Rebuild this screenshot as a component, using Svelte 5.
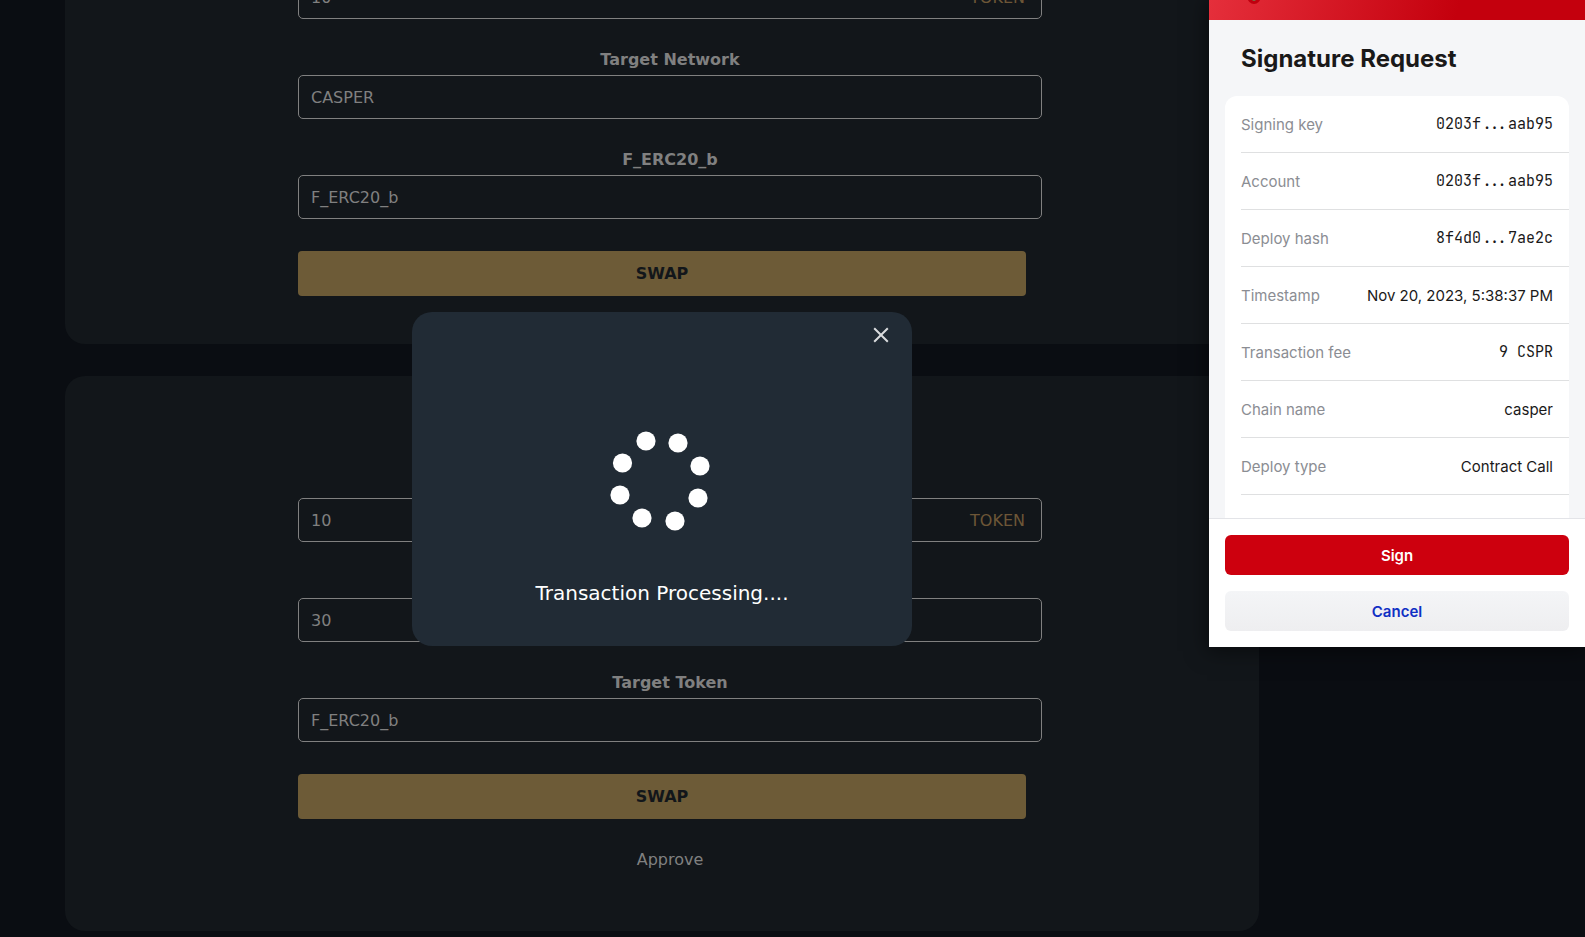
<script>
  const cards = [
    {
      id: 'mint',
      fields: [
        { id: 'amount', name: 'Amount', value: '10', unit: 'TOKEN' },
        { id: 'network', label: 'Target Network', value: 'CASPER' },
        { id: 'token', label: 'F_ERC20_b', value: 'F_ERC20_b' }
      ],
      approve: false
    },
    {
      id: 'burn',
      fields: [
        { id: 'amount', name: 'Amount', value: '10', unit: 'TOKEN' },
        { id: 'fee', name: 'Fee', value: '30' },
        { id: 'token', label: 'Target Token', value: 'F_ERC20_b' }
      ],
      approve: true
    }
  ];

  const details = [
    { name: 'Signing key', value: '0203f...aab95', mono: true },
    { name: 'Account', value: '0203f...aab95', mono: true },
    { name: 'Deploy hash', value: '8f4d0...7ae2c', mono: true },
    { name: 'Timestamp', value: 'Nov 20, 2023, 5:38:37 PM' },
    { name: 'Transaction fee', value: '9 CSPR', mono: true },
    { name: 'Chain name', value: 'casper' },
    { name: 'Deploy type', value: 'Contract Call' }
  ];

  const dots = [
    [56, 31], [88, 33], [110, 56], [108, 88],
    [85, 111], [52, 108], [30, 85], [32.5, 53]
  ];
</script>

<div class="page">
  <main class="workspace">
    {#each cards as card}
      <section class="card">
        <form class="form" onsubmit={(e) => e.preventDefault()}>
          {#each card.fields as field}
            <div class="field">
              {#if field.label}
                <label for="{card.id}-{field.id}">{field.label}</label>
              {/if}
              <div class="control">
                <input
                  id="{card.id}-{field.id}"
                  type="text"
                  value={field.value}
                  aria-label={field.name}
                />
                {#if field.unit}<span class="unit">{field.unit}</span>{/if}
              </div>
            </div>
          {/each}
          <button class="swap" type="submit">SWAP</button>
          {#if card.approve}
            <button class="approve" type="button">Approve</button>
          {/if}
        </form>
      </section>
    {/each}
  </main>

  <div class="modal-layer">
    <div class="modal" role="dialog" aria-label="Transaction status">
      <button class="close" type="button" aria-label="Close">
        <svg width="16" height="16" viewBox="0 0 16 16" aria-hidden="true">
          <path d="M1.2 1.2 14.8 14.8M14.8 1.2 1.2 14.8" stroke="#dadcde" stroke-width="2" fill="none" />
        </svg>
      </button>
      <svg class="spinner" width="144" height="140" viewBox="0 0 144 140" aria-hidden="true">
        {#each dots as [x, y]}
          <circle cx={x} cy={y} r="9.6" fill="#fff" />
        {/each}
      </svg>
      <p>Transaction Processing....</p>
    </div>
  </div>

  <aside class="wallet">
    <header class="brand">
      <svg width="24" height="20" viewBox="0 0 24 20" aria-hidden="true">
        <circle cx="13" cy="-2.5" r="6.5" fill="#c0000f" />
        <circle cx="13" cy="-1" r="2" fill="#7d6a45" />
      </svg>
    </header>
    <div class="request">
      <h1>Signature Request</h1>
      <dl>
        {#each details as row}
          <div class="row">
            <dt>{row.name}</dt>
            <dd class:mono={row.mono}>{row.value}</dd>
          </div>
        {/each}
      </dl>
    </div>
    <footer>
      <button class="sign" type="button">Sign</button>
      <button class="cancel" type="button">Cancel</button>
    </footer>
  </aside>
</div>

<style>
  :global(body) {
    margin: 0;
    background: #0a0d12;
  }

  .page {
    position: relative;
    box-sizing: border-box;
    min-height: 100vh;
    overflow: hidden;
    background: #0a0d12;
    color: #808080;
    font: 16px/24px "DejaVu Sans", Verdana, sans-serif;
  }

  button,
  input {
    font: inherit;
    color: inherit;
  }

  button {
    border: 0;
    padding: 0;
    cursor: pointer;
  }

  /* The workspace is scrolled so that the first card starts above the window. */
  .workspace {
    display: flex;
    flex-direction: column;
    gap: 32px;
    margin-top: -147px;
    margin-right: 261px;
    padding: 0 65px;
  }

  .card {
    padding: 98px 0 48px 16px;
    border-radius: 20px;
    background: #12161a;
  }

  .form {
    display: flex;
    flex-direction: column;
    max-width: 744px;
    margin: 0 auto;
  }

  .field {
    display: flex;
    flex-direction: column;
    justify-content: flex-end;
    min-height: 68px;
    margin-bottom: 32px;
  }

  .field label {
    padding-bottom: 6px;
    font-weight: 700;
    line-height: 18px;
    text-align: center;
  }

  .control {
    display: flex;
    align-items: center;
    box-sizing: border-box;
    height: 44px;
    padding: 2px 16px 0 12px;
    border: 1px solid #808080;
    border-radius: 5px;
  }

  .control input {
    flex: 1;
    min-width: 0;
    padding: 0;
    border: 0;
    outline: 0;
    background: transparent;
  }

  .unit {
    color: #6d5637;
  }

  .swap {
    height: 45px;
    margin-right: 16px;
    border-radius: 4px;
    background: #6d5b37;
    color: #12161a;
    font-weight: 700;
  }

  .approve {
    margin-top: 16px;
    padding: 13px 0 11px;
    background: transparent;
  }

  .modal-layer {
    position: absolute;
    inset: 0 261px 0 0;
    display: flex;
    justify-content: center;
    align-items: flex-start;
    padding-top: 312px;
  }

  .modal {
    display: flex;
    flex-direction: column;
    align-items: center;
    box-sizing: border-box;
    width: 500px;
    padding: 15px 23px 38px;
    border-radius: 20px;
    background: #212b35;
  }

  .close {
    display: flex;
    align-self: flex-end;
    background: transparent;
  }

  .spinner {
    margin-top: 67px;
  }

  .modal p {
    margin: 28px 0 0;
    color: #fff;
    font-size: 20px;
    line-height: 30px;
  }

  .wallet {
    position: absolute;
    top: 0;
    right: 0;
    width: 376px;
    background: #fff;
    box-shadow: 0 2px 20px 2px rgba(0, 0, 0, 0.5);
    color: #1a1919;
    font: 15px/24px Inter, "Open Sans", sans-serif;
  }

  .brand {
    height: 20px;
    padding-left: 32px;
    background: linear-gradient(106deg, #e52f3b 0%, #c4000d 66%);
  }

  .brand svg {
    display: block;
  }

  .request {
    padding: 25px 16px 0;
    background: #f5f6f8;
  }

  h1 {
    margin: 0 16px 23px;
    font-size: 24px;
    line-height: 28px;
    font-weight: 700;
  }

  dl {
    margin: 0;
    padding: 0 0 23px 16px;
    border-radius: 12px 12px 0 0;
    background: #fff;
  }

  .row {
    display: flex;
    justify-content: space-between;
    align-items: center;
    height: 56px;
    padding-right: 16px;
    border-bottom: 1px solid #dfe0e1;
  }

  dt {
    padding-top: 2px;
    color: #8b8d93;
  }

  dd {
    margin: 0;
    padding-top: 2px;
  }

  dd.mono {
    padding-top: 0;
    font-family: "JetBrains Mono", "DejaVu Sans Mono", monospace;
  }

  footer {
    display: flex;
    flex-direction: column;
    gap: 16px;
    padding: 16px;
    border-top: 1px solid #e3e4e8;
  }

  footer button {
    height: 40px;
    padding-top: 2px;
    border-radius: 6px;
    font-weight: 600;
  }

  .sign {
    background: #cd000e;
    color: #fff;
  }

  .cancel {
    background: linear-gradient(#f4f5f7, #eeeef0);
    color: #1030c4;
  }
</style>
